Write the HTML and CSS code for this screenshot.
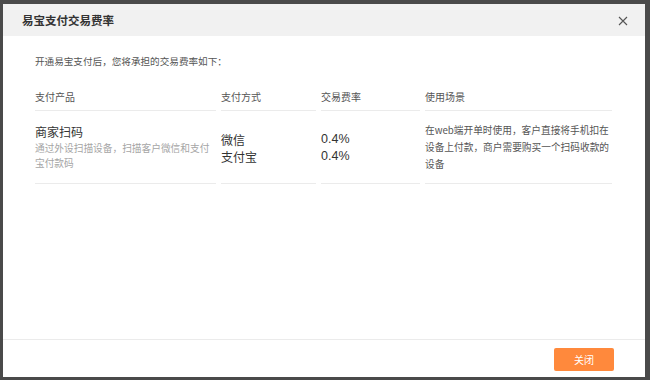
FILE: index.html
```html
<!DOCTYPE html>
<html lang="zh">
<head>
<meta charset="utf-8">
<link rel="stylesheet" href="styles.css">
</head>
<body>
<div class="backdrop">
  <div class="dialog">
    <div class="dialog-header">
      <span class="dialog-title">易宝支付交易费率</span>
      <span class="close">
        <svg width="10" height="10" viewBox="0 0 10 10"><path d="M1 1L9 9M9 1L1 9" stroke="#555" stroke-width="1.1" fill="none"/></svg>
      </span>
    </div>
    <div class="dialog-body">
      <p class="intro">开通易宝支付后，您将承担的交易费率如下：</p>
      <div class="table">
        <div class="th">支付产品</div>
        <div class="th">支付方式</div>
        <div class="th">交易费率</div>
        <div class="th">使用场景</div>
        <div class="td">
          <div class="prod">商家扫码</div>
          <div class="desc">通过外设扫描设备，扫描客户微信和支付宝付款码</div>
        </div>
        <div class="td"><div class="big">微信</div><div class="big">支付宝</div></div>
        <div class="td"><div class="big num">0.4%</div><div class="big num">0.4%</div></div>
        <div class="td"><div class="usage">在web端开单时使用，客户直接将手机扣在设备上付款，商户需要购买一个扫码收款的设备</div></div>
      </div>
    </div>
    <div class="dialog-footer">
      <button class="btn">关闭</button>
    </div>
  </div>
</div>
</body>
</html>
```
FILE: styles.css
```css
* { box-sizing: border-box; }
html, body { margin: 0; padding: 0; }
body {
  width: 650px; height: 380px; overflow: hidden;
  font-family: "Noto Sans CJK SC", "Liberation Sans", sans-serif;
  background: #4a4a4a;
}
.backdrop {
  width: 650px; height: 380px;
  padding: 4px 5px 3px 3px;
  display: flex;
}
.dialog {
  flex: 1;
  min-width: 0;
  background: #fff;
  display: flex; flex-direction: column;
}
.dialog-header {
  height: 32px;
  flex: none;
  background: #f1f1f1;
  display: flex; align-items: center; justify-content: space-between;
  padding: 0 17px 0 19px;
}
.dialog-title { font-size: 11.5px; color: #333; font-weight: bold; }
.close { display: flex; margin-top: 1px; }
.dialog-body { flex: 1; padding: 18px 30px 0 32px; }
.intro { margin: 0; font-size: 9.6px; color: #555; line-height: 14px; }
.table {
  margin-top: 17px;
  display: grid;
  grid-template-columns: 181px 95px 99px 187px;
  column-gap: 5px;
  width: 582px;
}
.th {
  font-size: 10px; color: #555;
  height: 26px; padding-top: 5px; line-height: 14px;
  border-bottom: 1px solid #ebebeb;
}
.td {
  border-bottom: 1px solid #ebebeb;
  height: 73px;
  display: flex; flex-direction: column; justify-content: center;
}
.prod { font-size: 12px; color: #333; line-height: 16px; }
.desc { font-size: 9.7px; color: #a5a5a5; line-height: 15px; margin-top: 1px; }
.big { font-size: 12px; color: #333; line-height: 17px; }
.td .big:first-child { margin-top: 2px; }
.num { font-family: "Liberation Sans", sans-serif; font-size: 12.5px; }
.usage { font-size: 9.7px; color: #555; line-height: 17px; margin-top: 1px; }
.dialog-footer {
  height: 38px;
  flex: none;
  border-top: 1px solid #ebebeb;
  display: flex; align-items: center; justify-content: flex-end;
  padding: 0 31px 0 0;
}
.btn {
  width: 60px; height: 23px;
  background: #ff893c; color: #fff;
  border: none; border-radius: 2px;
  font-family: inherit; font-size: 10px;
  margin-top: 2px;
}
```
